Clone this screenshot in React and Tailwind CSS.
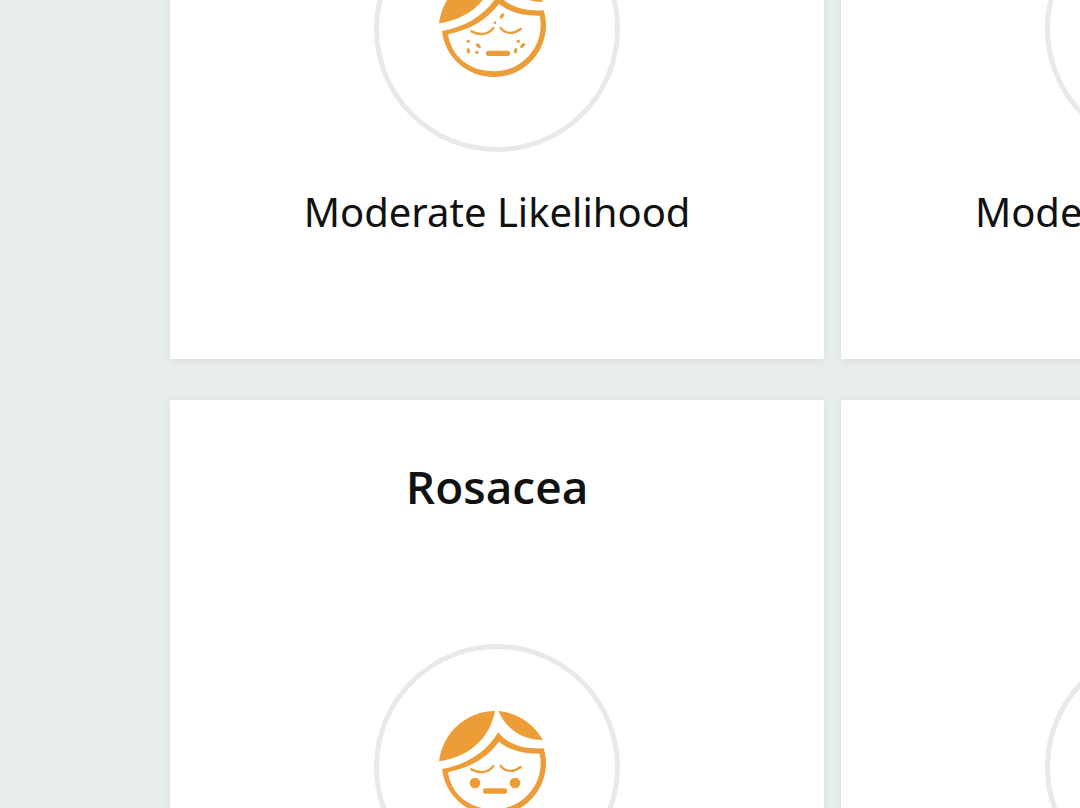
import React from 'react'

const results = [
  { id: 1, face: 'spots', level: 'Moderate Likelihood', header: false },
  { id: 2, face: 'spots', level: 'Moderate Likelihood', header: false },
  { id: 3, face: 'flush', level: 'Moderate Likelihood', header: true, title: 'Rosacea' },
  { id: 4, face: 'flush', level: 'Moderate Likelihood', header: true },
]

function Spots() {
  return (
    <g>
      <circle cx="115" cy="238" r="5" />
      <ellipse cx="115" cy="266" rx="5" ry="8" />
      <ellipse cx="145" cy="251" rx="5" ry="9" transform="rotate(-48 145 251)" />
      <circle cx="141" cy="271" r="5" />
      <circle cx="265" cy="238" r="5" />
      <ellipse cx="257" cy="266" rx="5" ry="8" transform="rotate(10 257 266)" />
      <ellipse cx="278" cy="251" rx="5" ry="9" transform="rotate(45 278 251)" />
      <ellipse cx="216" cy="162" rx="5" ry="9" transform="rotate(35 216 162)" />
      <circle cx="195" cy="182" r="4" />
    </g>
  )
}

function Face({ type }) {
  return (
    <svg viewBox="21 21 360 360" className="size-[120px] fill-[#ec9d37]" aria-hidden="true">
      {/* hair */}
      <path d="M195 33C108 34 38 97 27 184C105 173 178 125 195 33Z" />
      <path d="M205 33C263 38 310 70 339 120C285 119 235 98 205 33Z" />
      {/* head */}
      <path
        fillRule="evenodd"
        d="M36 207C110 193 165 160 205 97C235 135 280 147 341 145C345 158 348 172 348 189C348 275 279 345 192 345C110 345 45 285 36 207ZM54 217C120 202 170 175 207 125C240 152 280 162 329 161C331 170 332 180 332 189C332 265 270 328 192 328C120 328 64 285 54 217Z"
      />
      {/* eyes */}
      <g fill="none" stroke="#ec9d37" strokeWidth="7" strokeLinecap="round">
        <path d="M124 208C150 221 175 218 190 198" />
        <path d="M212 198C226 216 250 218 272 201" />
      </g>
      {type === 'spots' ? (
        <>
          <Spots />
          <rect x="168" y="266" width="72" height="16" rx="6" />
        </>
      ) : (
        <>
          <circle cx="135" cy="249" r="16" />
          <circle cx="255" cy="249" r="16" />
          <rect x="159" y="265" width="72" height="16" rx="6" />
        </>
      )}
    </svg>
  )
}

function ResultCard({ item }) {
  return (
    <article className="flex flex-col items-center bg-white pb-[119px] text-[#111] shadow-[0_2px_8px_rgba(0,0,0,0.07)]">
      {item.header && (
        <header className="mt-14 mb-32 min-h-[60px]">
          {item.title && <h2 className="text-[46px] leading-[60px] font-semibold">{item.title}</h2>}
        </header>
      )}
      <div className="flex size-[246px] items-center justify-center rounded-full border-5 border-[#e9e9e9]">
        <Face type={item.face} />
      </div>
      <p className="mt-8 font-['Noto_Sans',sans-serif] text-[40px] leading-[56px] whitespace-nowrap">{item.level}</p>
    </article>
  )
}

function App() {
  return (
    <div className="h-screen overflow-hidden bg-[#e8eeee] font-['Open_Sans','Noto_Sans',sans-serif]">
      <main className="-mt-[94px] grid grid-cols-[calc(72%-1px)_calc(72%-1px)] gap-x-[17px] gap-y-[41px] pl-[170px]">
        {results.map((item) => (
          <ResultCard key={item.id} item={item} />
        ))}
      </main>
    </div>
  )
}

export default App
